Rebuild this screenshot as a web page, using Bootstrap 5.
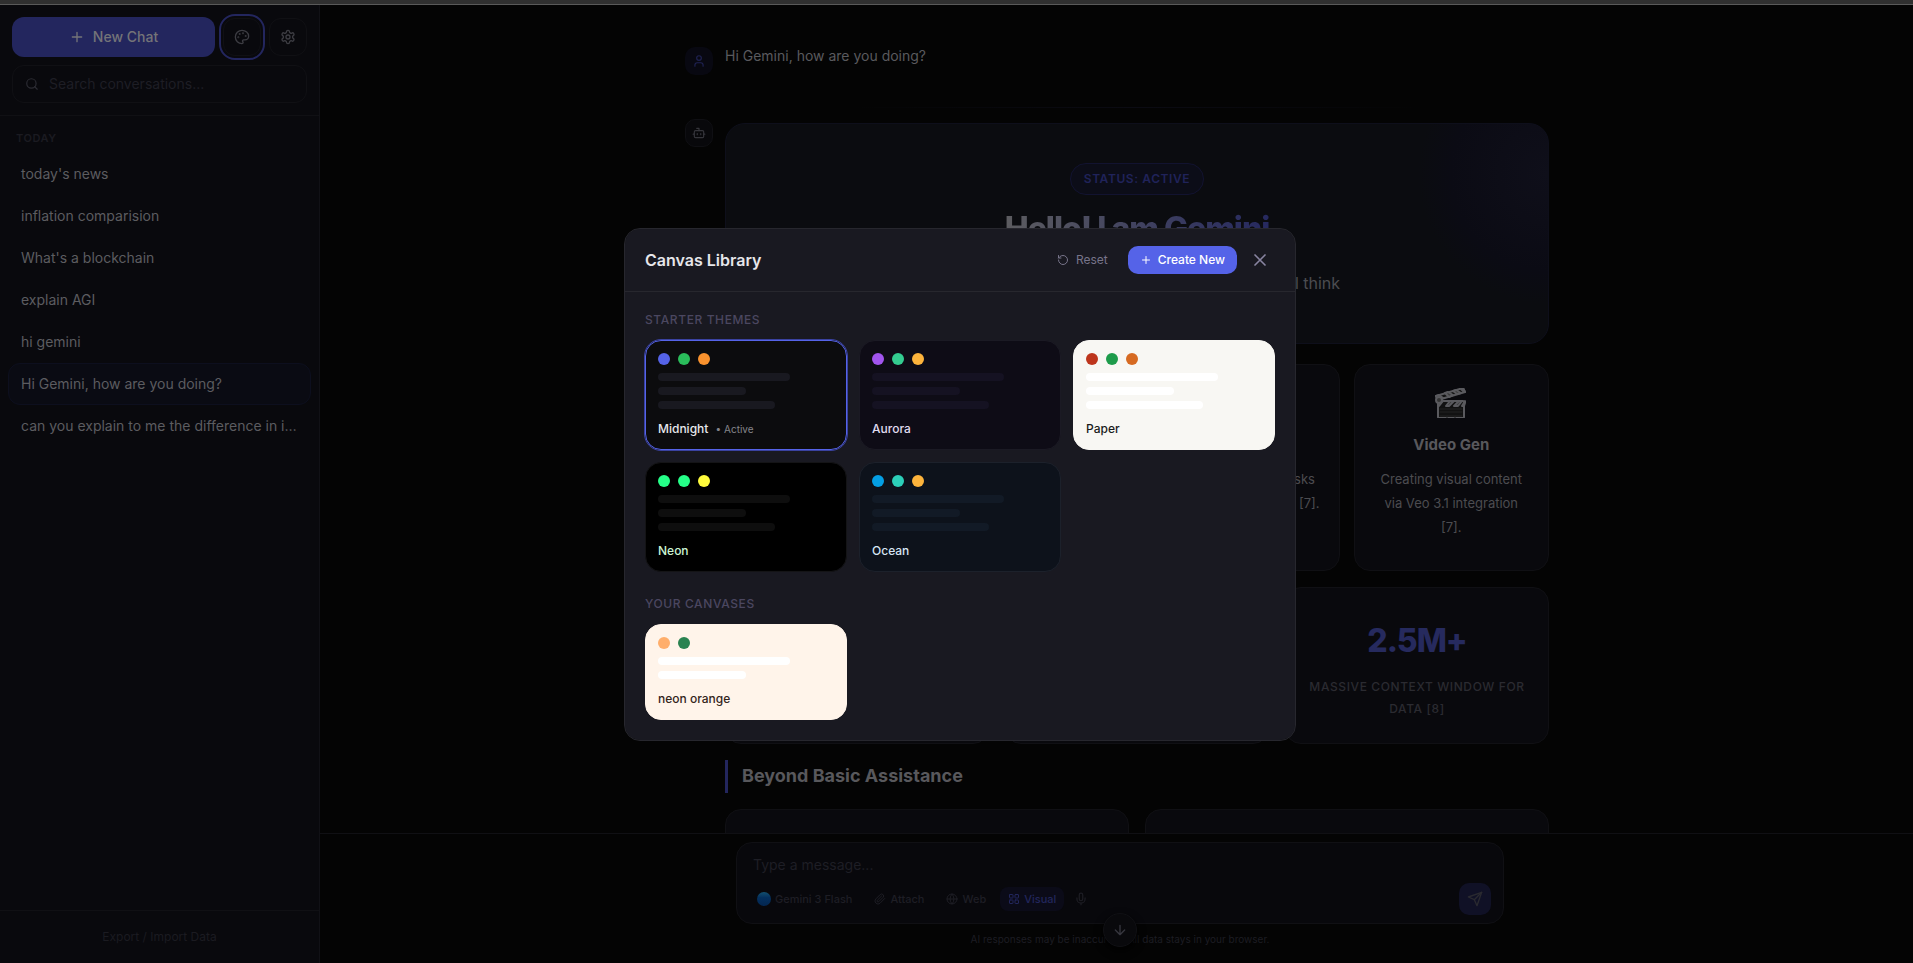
<!DOCTYPE html>
<html lang="en">
<head>
<meta charset="utf-8">
<meta name="viewport" content="width=device-width, initial-scale=1">
<title>Canvas Library</title>
<link href="https://cdn.jsdelivr.net/npm/bootstrap@5.3.0/dist/css/bootstrap.min.css" rel="stylesheet">
<style>
:root{--page:#040404;--panel:#09090d;--line:#101014;--accent:#23265e;--ink:#5a5a5e}
body{font-family:Inter,"Liberation Sans",sans-serif;font-size:14px;line-height:22px;background:#000;color:var(--ink)}
svg{fill:none;stroke:currentColor;stroke-width:2;stroke-linecap:round;stroke-linejoin:round;flex:none}
button{font:inherit;color:inherit;background:none;border:0;padding:0}
a{color:inherit;text-decoration:none}
.windowbar{height:5px;background:#303030;border-bottom:1px solid #5a5a5a}
.stage{margin-right:-7px;background:var(--page);min-height:0}

.side{width:320px;background:var(--panel);border-right:1px solid #111116}
.side-top{padding:12px;border-bottom:1px solid var(--line)}
.new-chat{height:40px;border-radius:12px;background:var(--accent);color:#747478;font-weight:500}
.tool{width:38px;height:38px;border:1px solid var(--line);border-radius:12px;color:#3d3d43}
.tool.focused{outline:2px solid var(--accent);outline-offset:2px}
.search{height:38px;border:1px solid var(--line);border-radius:12px;padding:0 12px;gap:10px;color:#2c2c33}
.search input{background:none;border:0;outline:0;min-width:0;padding:0;color:var(--ink)}
.search input::placeholder,.composer textarea::placeholder{color:#1e1e25;opacity:1}
.group-title{font-size:11px;line-height:16px;font-weight:600;letter-spacing:.05em;color:#1b1b21;margin:0;padding:14px 8px 7px}
.chat-link{height:42px;line-height:40px;padding:0 12px;border:1px solid transparent;border-radius:12px;color:#5c5c60}
.chat-link.current{background:#0a0b13;border-color:#0d0f1e}
.side-foot{height:53px;border-top:1px solid var(--line);font-size:12px;color:#1b1b21}

.thread{max-width:896px;padding:40px 16px 0}
.scroller{padding-right:6px;min-height:0}
.message{gap:12px}
.message + .message{margin-top:32px}
.avatar{width:28px;height:28px;border-radius:10px;flex:none}
.avatar-user{background:#080811;color:#1f2253;margin-top:2px}
.avatar-bot{background:#08080b;border:1px solid #0f0f13;color:#35353b;margin-top:12px}
.fade-line{height:1px;background:linear-gradient(90deg,transparent 15%,#0b0b13,transparent 85%);margin-bottom:15px}
.hero{border:1px solid #0e0f1b;border-radius:20px;padding:39px 20px 46px;background:radial-gradient(circle 130px at 100% 50px,#0f0f1a,#0b0b14 75%,transparent),#0b0c10}
.hero-badge{height:32px;line-height:30px;padding:0 13px;border:1px solid #121330;border-radius:16px;background:#0c0d18;color:#20235a;font-size:12px;font-weight:600;letter-spacing:.05em}
.hero h1{font-size:32px;line-height:40px;font-weight:800;margin:14px 0 20px;letter-spacing:-1px}
.hero h1 span{background:linear-gradient(90deg,#5c5c60,#26295f);-webkit-background-clip:text;background-clip:text;color:transparent}
.hero p{font-size:16px;line-height:28px;margin:0;color:#4c4c50}
.pane{background:var(--panel);border:1px solid var(--line);border-radius:16px}
.tiles{display:grid;gap:14px;grid-template-columns:repeat(4,minmax(0,1fr));margin-top:20px}
.tile{padding:23px 19px 31px}
.tile svg{display:block;margin:0 auto 15px}
.tile h2{font-size:15px;line-height:24px;font-weight:700;color:#58585c;margin:0 0 10px}
.tile p{font-size:13px;line-height:24px;margin:0;color:#4c4c50}
.cols-3,.cols-2{display:grid;gap:16px;grid-template-columns:repeat(3,1fr);margin-top:16px}
.cols-2{grid-template-columns:repeat(2,1fr)}
.cols-2 .pane{height:160px}
.stat{padding:33px 16px 23px}
.stat strong{display:block;font-size:32px;line-height:40px;font-weight:800;letter-spacing:-1px;color:#262a5e;margin-bottom:15px}
.stat span{display:block;font-size:12px;line-height:22px;font-weight:500;letter-spacing:.05em;color:#2b2b31}
.section-title{font-size:18px;line-height:32px;font-weight:700;color:#58585c;border-left:3px solid var(--accent);padding:0 0 1px 14px;margin:16px 0 0}

.dock{border-top:1px solid var(--line);padding:8px 16px 17px;background:var(--page)}
.composer{max-width:768px;background:#08080c;border:1px solid var(--line);border-radius:16px;padding:8px 12px}
.composer textarea{display:block;width:100%;height:28px;line-height:28px;font-size:14px;background:none;border:0;outline:0;resize:none;margin-bottom:4px;padding:0 4px;overflow:hidden;color:var(--ink)}
.tools{gap:6px}
.chip{height:24px;padding:0 8px;border-radius:8px;font-size:11px;font-weight:500;color:#1e1e25;gap:4px}
.chip.on{background:#0b0b18;color:#22265c}
.orb{width:14px;height:14px;border-radius:50%;background:linear-gradient(#13506f,#04305e 40%,#032650)}
.send{width:32px;height:32px;border-radius:10px;background:#101126;color:#2a2a30}
.note{font-size:10px;line-height:14px;color:#1d1d23;margin:8px 0 0}
.jump{position:absolute;left:50%;bottom:16px;margin-left:-17px;width:34px;height:34px;border-radius:50%;background:#09090c;border:1px solid #101014;color:#37373f;box-shadow:0 4px 8px #000}

.library{--bs-modal-width:672px;--bs-modal-margin:0px;--bs-modal-bg:#191921;--bs-modal-border-color:#27272e;--bs-modal-border-radius:16px;--bs-modal-color:#e6e6ea}
.library .modal-header{height:63px;padding:0 20px;border-bottom:1px solid #27272e}
.library .modal-body{padding:20px}
.library h2{font-size:16px;line-height:24px;font-weight:600;margin:0}
.library h3{font-size:12px;line-height:16px;font-weight:500;letter-spacing:.05em;color:#4b4760;margin:0 0 12px}
.reset{font-size:12px;color:#77748a;gap:7px;padding:0 20px 0 0}
.create{height:28px;padding:0 12px;border-radius:10px;background:#5563e8;color:#fff;font-size:12px;font-weight:500;gap:6px}
.close-lib{color:#8884a0;padding:0 5px 0 13px}
.swatches{display:grid;grid-template-columns:repeat(3,1fr);gap:12px}
.theme{border:1px solid var(--edge);border-radius:16px;background:var(--bg);color:var(--fg);padding:12px 12px 11px;text-align:left}
.theme i{width:12px;height:12px;border-radius:50%}
.theme b{display:block;height:8px;border-radius:4px;background:var(--bar);margin-bottom:6px;width:75%}
.theme b:nth-of-type(2){width:50%}
.theme b:nth-of-type(3){width:calc(100% * 2 / 3)}
.theme-name{font-size:12px;line-height:18px;font-weight:500;margin-top:11px}
.theme-name small{font-size:10px;font-weight:400;color:#85858a;margin-left:4px}
.theme.active{outline:1px solid #3a42a0}
.t-midnight{--bg:#0c0c0e;--bar:#191920;--fg:#e8e8ec;--edge:#5563e8}
.t-aurora{--bg:#0e0c16;--bar:#151222;--fg:#e0dcf0;--edge:#1b1a24}
.t-paper{--bg:#f8f7f3;--bar:#fff;--fg:#1a1a1a;--edge:#f8f7f3}
.t-neon{--bg:#000;--bar:#0e0e0e;--fg:#ccf5d4;--edge:#141416}
.t-ocean{--bg:#0d121b;--bar:#121a26;--fg:#d6e4f4;--edge:#1c212b}
.t-orange{--bg:#fff4ea;--bar:#fff;--fg:#33241a;--edge:#fff4ea}
</style>
</head>
<body class="vh-100 overflow-hidden d-flex flex-column">
<div class="windowbar flex-shrink-0"></div>
<div class="stage flex-grow-1 d-flex position-relative">

  <aside class="side d-flex flex-column flex-shrink-0">
    <div class="side-top">
      <div class="d-flex align-items-center gap-2">
        <button class="new-chat flex-grow-1 d-flex align-items-center justify-content-center gap-2" type="button">
          <svg width="16" height="16" viewBox="0 0 24 24"><path d="M5 12h14M12 5v14"/></svg>New Chat</button>
        <button class="tool focused d-flex align-items-center justify-content-center" type="button" aria-label="Canvas library">
          <svg width="16" height="16" viewBox="0 0 24 24"><circle cx="13.5" cy="6.5" r=".5"/><circle cx="17.5" cy="10.5" r=".5"/><circle cx="8.5" cy="7.5" r=".5"/><circle cx="6.5" cy="12.5" r=".5"/><path d="M12 2C6.500 2 2 6.500 2 12s4.500 10 10 10c.926 0 1.648-.746 1.648-1.688 0-.437-.18-.835-.437-1.125-.29-.289-.438-.652-.438-1.125a1.640 1.640 0 0 1 1.668-1.668h1.996c3.051 0 5.555-2.503 5.555-5.554C21.965 6.012 17.461 2 12 2z"/></svg></button>
        <button class="tool d-flex align-items-center justify-content-center" type="button" aria-label="Settings">
          <svg width="16" height="16" viewBox="0 0 24 24"><path d="M12.220 2h-.44a2 2 0 0 0-2 2v.18a2 2 0 0 1-1 1.730l-.43.25a2 2 0 0 1-2 0l-.15-.08a2 2 0 0 0-2.730.73l-.22.38a2 2 0 0 0 .73 2.730l.15.1a2 2 0 0 1 1 1.720v.51a2 2 0 0 1-1 1.740l-.15.09a2 2 0 0 0-.73 2.730l.22.38a2 2 0 0 0 2.730.73l.15-.08a2 2 0 0 1 2 0l.43.25a2 2 0 0 1 1 1.730V20a2 2 0 0 0 2 2h.44a2 2 0 0 0 2-2v-.18a2 2 0 0 1 1-1.730l.43-.25a2 2 0 0 1 2 0l.15.08a2 2 0 0 0 2.730-.73l.22-.39a2 2 0 0 0-.73-2.730l-.15-.08a2 2 0 0 1-1-1.740v-.5a2 2 0 0 1 1-1.740l.15-.09a2 2 0 0 0 .73-2.730l-.22-.38a2 2 0 0 0-2.730-.73l-.15.08a2 2 0 0 1-2 0l-.43-.25a2 2 0 0 1-1-1.730V4a2 2 0 0 0-2-2z"/><circle cx="12" cy="12" r="3"/></svg></button>
      </div>
      <label class="search d-flex align-items-center mt-2">
        <svg width="14" height="14" viewBox="0 0 24 24"><circle cx="11" cy="11" r="8"/><path d="m21 21-4.300-4.300"/></svg>
        <input class="flex-grow-1" type="search" placeholder="Search conversations..." aria-label="Search conversations">
      </label>
    </div>
    <nav class="px-2 flex-grow-1">
      <p class="group-title">TODAY</p>
      <a class="chat-link d-block text-truncate" href="#">today's news</a>
      <a class="chat-link d-block text-truncate" href="#">inflation comparision</a>
      <a class="chat-link d-block text-truncate" href="#">What's a blockchain</a>
      <a class="chat-link d-block text-truncate" href="#">explain AGI</a>
      <a class="chat-link d-block text-truncate" href="#">hi gemini</a>
      <a class="chat-link current d-block text-truncate" href="#">Hi Gemini, how are you doing?</a>
      <a class="chat-link d-block text-truncate" href="#">can you explain to me the difference in i…</a>
    </nav>
    <div class="side-foot d-flex align-items-center justify-content-center"><button type="button">Export / Import Data</button></div>
  </aside>

  <main class="flex-grow-1 d-flex flex-column position-relative">
    <div class="scroller flex-grow-1 overflow-hidden">
      <div class="thread mx-auto">
        <div class="message d-flex">
          <div class="avatar avatar-user d-flex align-items-center justify-content-center"><svg width="14" height="14" viewBox="0 0 24 24"><path d="M19 21v-2a4 4 0 0 0-4-4H9a4 4 0 0 0-4 4v2"/><circle cx="12" cy="7" r="4"/></svg></div>
          <div>Hi Gemini, how are you doing?</div>
        </div>
        <div class="message d-flex">
          <div class="avatar avatar-bot d-flex align-items-center justify-content-center"><svg width="14" height="14" viewBox="0 0 24 24"><path d="M12 8V4H8"/><rect x="4" y="8" width="16" height="12" rx="2"/><path d="M2 14h2M20 14h2M15 13v2M9 13v2"/></svg></div>
          <article class="flex-grow-1 text-center">
            <div class="fade-line"></div>
            <section class="hero">
              <div class="hero-badge d-inline-block align-top">STATUS: ACTIVE</div>
              <h1><span>Hello! I am Gemini</span></h1>
              <p>Your multimodal partner, and built to help you all think</p>
            </section>
            <div class="tiles">
              <section class="pane tile"></section>
              <section class="pane tile"></section>
              <section class="pane tile">
                <svg width="32" height="30" viewBox="0 0 32 30"></svg>
                <h2>Agents</h2>
                <p class="text-nowrap">Handling complex tasks<br>with more tools alone [7].</p>
              </section>
              <section class="pane tile">
                <svg width="32" height="30" viewBox="0 0 32 30" stroke="none">
                  <rect x="3" y="13" width="26" height="17" rx="1" fill="#121212"/>
                  <path d="M1 8 28 0l2 4L3 12z" fill="#121212"/>
                  <path d="m1 8 3-1 4 3-5 2zM10 5l3-1 5 3-4 2zM18 3l3-1 5 3-4 1zM26 1l2-1 2 4h-1zM3 18v-2l2-3h3l-4 5zM11 18l4-5h4l-5 5zM19 18l5-5h3l-4 5zM27 18l3-5v2l-1 3z" fill="#3a3a3a"/>
                  <circle cx="4" cy="12" r="3" fill="#343434"/>
                  <path d="M5 21h22M5 24h22M5 28h22M12 28v2M20 28v2" stroke="#222" stroke-width="1"/>
                </svg>
                <h2>Video Gen</h2>
                <p>Creating visual content via Veo 3.1 integration [7].</p>
              </section>
            </div>
            <div class="cols-3">
              <section class="pane stat"></section>
              <section class="pane stat"></section>
              <section class="pane stat"><strong>2.5M+</strong><span>MASSIVE CONTEXT WINDOW FOR DATA [8]</span></section>
            </div>
            <h2 class="section-title text-start">Beyond Basic Assistance</h2>
            <div class="cols-2"><section class="pane"></section><section class="pane"></section></div>
          </article>
        </div>
      </div>
    </div>
    <div class="dock flex-shrink-0">
      <form class="composer mx-auto">
        <textarea placeholder="Type a message..." aria-label="Message"></textarea>
        <div class="tools d-flex align-items-center">
          <button class="chip d-flex align-items-center" type="button"><span class="orb"></span>Gemini 3 Flash</button>
          <button class="chip d-flex align-items-center" type="button"><svg width="12" height="12" viewBox="0 0 24 24"><path d="m21.440 11.050-9.190 9.190a6 6 0 0 1-8.490-8.490l8.570-8.570A4 4 0 1 1 18 8.840l-8.590 8.570a2 2 0 0 1-2.830-2.830l8.490-8.480"/></svg>Attach</button>
          <button class="chip d-flex align-items-center" type="button"><svg width="12" height="12" viewBox="0 0 24 24"><circle cx="12" cy="12" r="10"/><path d="M12 2a14.500 14.500 0 0 0 0 20 14.500 14.500 0 0 0 0-20M2 12h20"/></svg>Web</button>
          <button class="chip on d-flex align-items-center" type="button"><svg width="12" height="12" viewBox="0 0 24 24"><rect x="3" y="3" width="7" height="7" rx="1"/><rect x="14" y="3" width="7" height="7" rx="1"/><rect x="14" y="14" width="7" height="7" rx="1"/><rect x="3" y="14" width="7" height="7" rx="1"/></svg>Visual</button>
          <button class="chip px-1 d-flex align-items-center" type="button" aria-label="Dictate"><svg width="14" height="14" viewBox="0 0 24 24"><path d="M12 2a3 3 0 0 0-3 3v7a3 3 0 0 0 6 0V5a3 3 0 0 0-3-3Z"/><path d="M19 10v2a7 7 0 0 1-14 0v-2M12 19v3"/></svg></button>
          <button class="send d-flex align-items-center justify-content-center ms-auto" type="button" aria-label="Send"><svg width="16" height="16" viewBox="0 0 24 24"><path d="m22 2-7 20-4-9-9-4Z"/><path d="M22 2 11 13"/></svg></button>
        </div>
      </form>
      <p class="note text-center">AI responses may be inaccurate. All data stays in your browser.</p>
    </div>
    <button class="jump d-flex align-items-center justify-content-center" type="button" aria-label="Scroll to bottom"><svg width="16" height="16" viewBox="0 0 24 24"><path d="M12 5v14M19 12l-7 7-7-7"/></svg></button>
  </main>

  <div class="modal library d-block position-absolute" role="dialog" aria-labelledby="lib-title">
    <div class="modal-dialog modal-dialog-centered">
      <div class="modal-content">
        <div class="modal-header">
          <h2 id="lib-title">Canvas Library</h2>
          <div class="d-flex align-items-center">
            <button class="reset d-flex align-items-center" type="button"><svg width="12" height="12" viewBox="0 0 24 24"><path d="M3 12a9 9 0 1 0 9-9 9.750 9.750 0 0 0-6.740 2.740L3 8"/><path d="M3 3v5h5"/></svg>Reset</button>
            <button class="create d-flex align-items-center" type="button"><svg width="12" height="12" viewBox="0 0 24 24"><path d="M5 12h14M12 5v14"/></svg>Create New</button>
            <button class="close-lib d-flex" type="button" aria-label="Close"><svg width="20" height="20" viewBox="0 0 24 24"><path d="M18 6 6 18M6 6l12 12"/></svg></button>
          </div>
        </div>
        <div class="modal-body">
          <h3>STARTER THEMES</h3>
          <div class="swatches mb-4">
            <button class="theme t-midnight active" type="button"><span class="d-flex gap-2 mb-2"><i style="background:#5563e8"></i><i style="background:#2abd5b"></i><i style="background:#f9922e"></i></span><b></b><b></b><b></b><div class="theme-name">Midnight <small>• Active</small></div></button>
            <button class="theme t-aurora" type="button"><span class="d-flex gap-2 mb-2"><i style="background:#a255ee"></i><i style="background:#34cc90"></i><i style="background:#fdb43c"></i></span><b></b><b></b><b></b><div class="theme-name">Aurora</div></button>
            <button class="theme t-paper" type="button"><span class="d-flex gap-2 mb-2"><i style="background:#bd351c"></i><i style="background:#1d9b4a"></i><i style="background:#d66a22"></i></span><b></b><b></b><b></b><div class="theme-name">Paper</div></button>
            <button class="theme t-neon" type="button"><span class="d-flex gap-2 mb-2"><i style="background:#25ff88"></i><i style="background:#25ff88"></i><i style="background:#fffb3c"></i></span><b></b><b></b><b></b><div class="theme-name">Neon</div></button>
            <button class="theme t-ocean" type="button"><span class="d-flex gap-2 mb-2"><i style="background:#049fe4"></i><i style="background:#2ccfb9"></i><i style="background:#fdb43c"></i></span><b></b><b></b><b></b><div class="theme-name">Ocean</div></button>
          </div>
          <h3>YOUR CANVASES</h3>
          <div class="swatches">
            <button class="theme t-orange" type="button"><span class="d-flex gap-2 mb-2"><i style="background:#ffae6b"></i><i style="background:#2a8250"></i></span><b></b><b></b><div class="theme-name">neon orange</div></button>
          </div>
        </div>
      </div>
    </div>
  </div>
</div>
<script src="https://cdn.jsdelivr.net/npm/bootstrap@5.3.0/dist/js/bootstrap.bundle.min.js"></script>
</body>
</html>
